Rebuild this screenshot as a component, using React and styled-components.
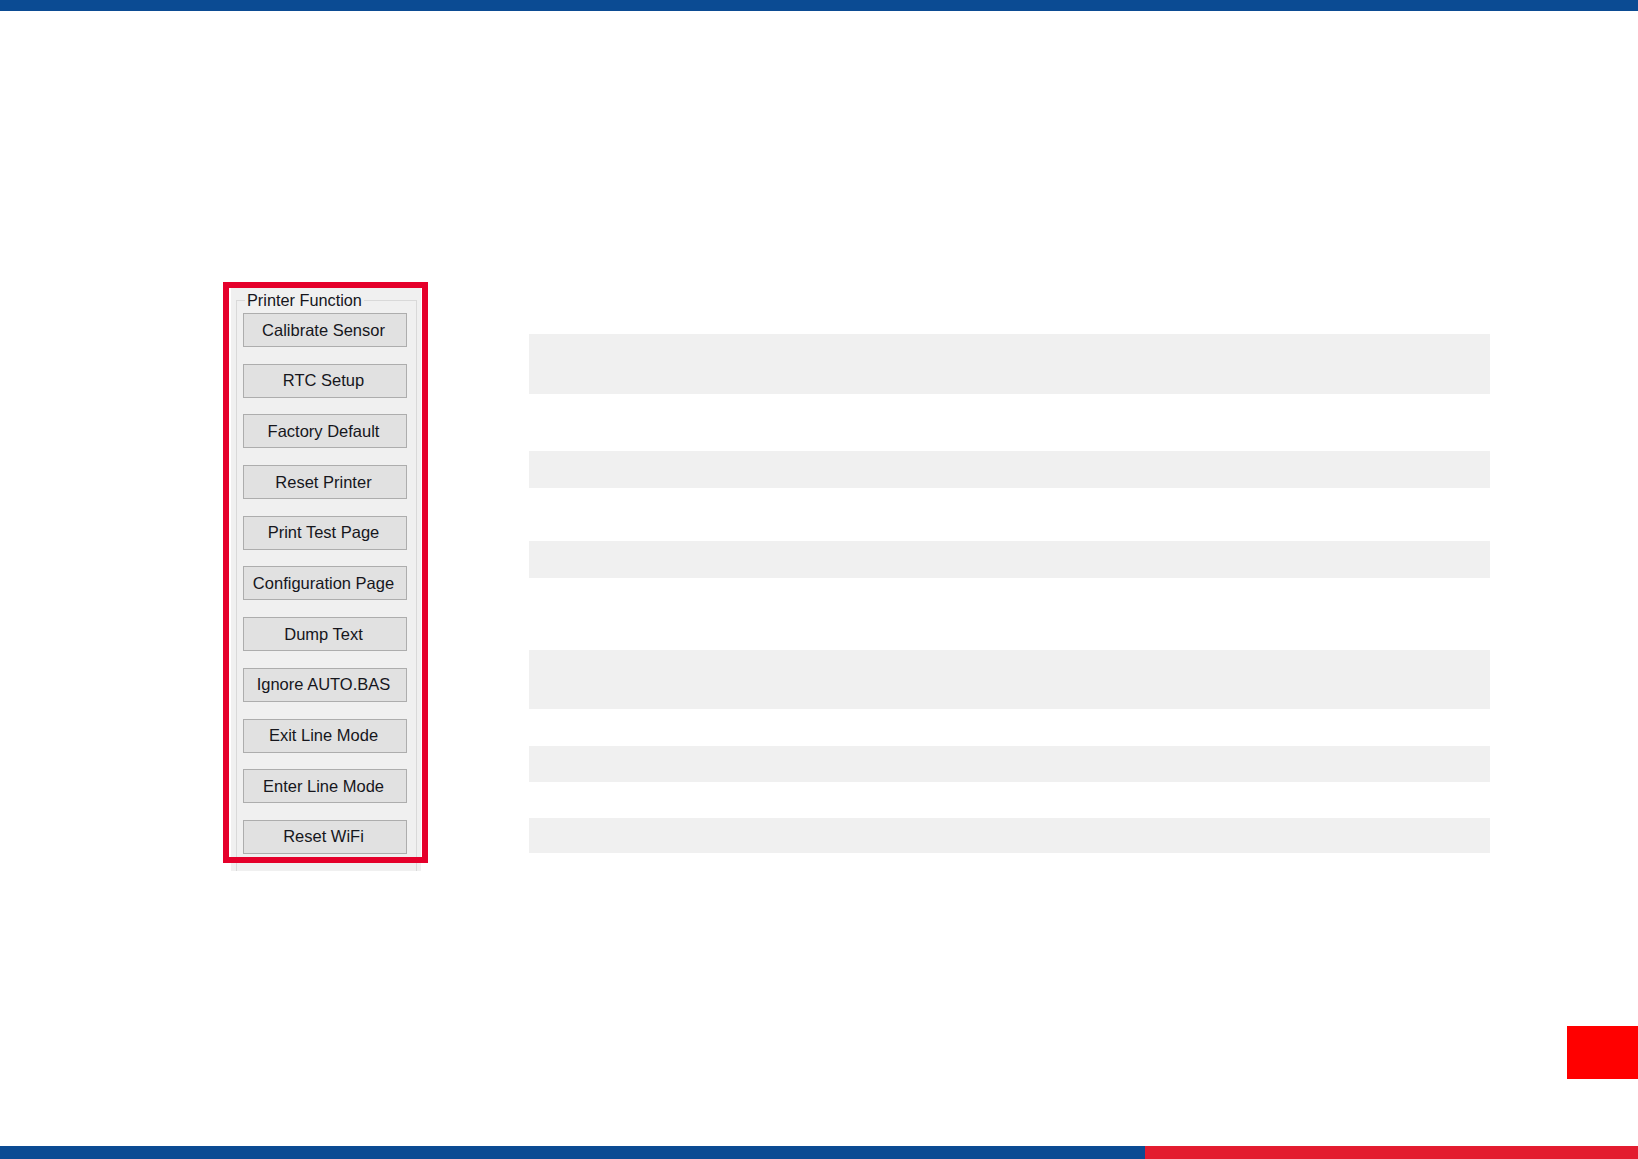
import styled, { createGlobalStyle } from "styled-components";

const GlobalStyle = createGlobalStyle`
  html, body {
    margin: 0;
    padding: 0;
    background: #ffffff;
  }
  body {
    font-family: "Liberation Sans", Arial, sans-serif;
  }
`;

const printerFunctions = [
  "Calibrate Sensor",
  "RTC Setup",
  "Factory Default",
  "Reset Printer",
  "Print Test Page",
  "Configuration Page",
  "Dump Text",
  "Ignore AUTO.BAS",
  "Exit Line Mode",
  "Enter Line Mode",
  "Reset WiFi",
];

// description rows next to the panel: height and space above each
const descriptionRows = [
  { height: 60, space: 0 },
  { height: 37, space: 57 },
  { height: 37, space: 53 },
  { height: 59, space: 72 },
  { height: 36, space: 37 },
  { height: 35, space: 36 },
];

function App() {
  return (
    <Page>
      <GlobalStyle />
      <TopBar />
      <Main>
        <Content>
          <Panel>
            <Group>
              <Legend>Printer Function</Legend>
              <ButtonStack>
                {printerFunctions.map((name) => (
                  <FunctionButton key={name} type="button">
                    {name}
                  </FunctionButton>
                ))}
              </ButtonStack>
            </Group>
            <Highlight />
          </Panel>
          <Rows>
            {descriptionRows.map((row, i) => (
              <Row key={i} $height={row.height} $space={row.space} />
            ))}
          </Rows>
        </Content>
        <PageTab />
      </Main>
      <BottomBar>
        <BlueSegment />
        <RedSegment />
      </BottomBar>
    </Page>
  );
}

const Page = styled.div`
  display: flex;
  flex-direction: column;
  width: 100%;
  height: 100vh;
  overflow: hidden;
`;

const TopBar = styled.div`
  height: 11px;
  flex-shrink: 0;
  background: #0b4b93;
`;

const Main = styled.main`
  flex: 1;
  display: flex;
  flex-direction: column;
  padding: 274px 0 0 231px;
  box-sizing: border-box;
`;

const Content = styled.div`
  display: flex;
  align-items: flex-start;
`;

const Panel = styled.div`
  position: relative;
  flex-shrink: 0;
  width: 190px;
  height: 586px;
  background: #f0f0f0;
`;

const Group = styled.fieldset`
  box-sizing: border-box;
  width: 181px;
  height: 580px;
  margin: 6px 0 0 5px;
  padding: 0 0 0 6px;
  border: 1px solid #d9d9d9;
  border-bottom: none;
  min-width: 0;
`;

const Legend = styled.legend`
  margin-left: 2px;
  padding: 0 2px;
  font-size: 16.3px;
  line-height: 18px;
  color: #16161c;
`;

const ButtonStack = styled.div`
  display: flex;
  flex-direction: column;
  gap: 16.7px;
  padding-top: 4px;
`;

const FunctionButton = styled.button`
  width: 164px;
  height: 34px;
  padding: 0 3px 0 0;
  border: 1px solid #adadad;
  border-radius: 0;
  background: #e1e1e1;
  font-family: "Liberation Sans", Arial, sans-serif;
  font-size: 16.5px;
  color: #16161c;
  text-align: center;
`;

const Highlight = styled.div`
  position: absolute;
  left: -8px;
  top: -3px;
  width: 205px;
  height: 581px;
  box-sizing: border-box;
  border: 6px solid #e5002b;
  pointer-events: none;
`;

const Rows = styled.div`
  display: flex;
  flex-direction: column;
  width: 961px;
  margin: 49px 0 0 108px;
`;

const Row = styled.div`
  height: ${(p) => p.$height}px;
  margin-top: ${(p) => p.$space}px;
  background: #f0f0f0;
`;

const PageTab = styled.div`
  align-self: flex-end;
  margin-top: auto;
  margin-bottom: 67px;
  width: 71px;
  height: 53px;
  background: #ff0000;
`;

const BottomBar = styled.div`
  display: flex;
  height: 13px;
  flex-shrink: 0;
`;

const BlueSegment = styled.div`
  width: 1145px;
  background: #0b4b93;
`;

const RedSegment = styled.div`
  flex: 1;
  background: #e31c2f;
`;

export default App;
